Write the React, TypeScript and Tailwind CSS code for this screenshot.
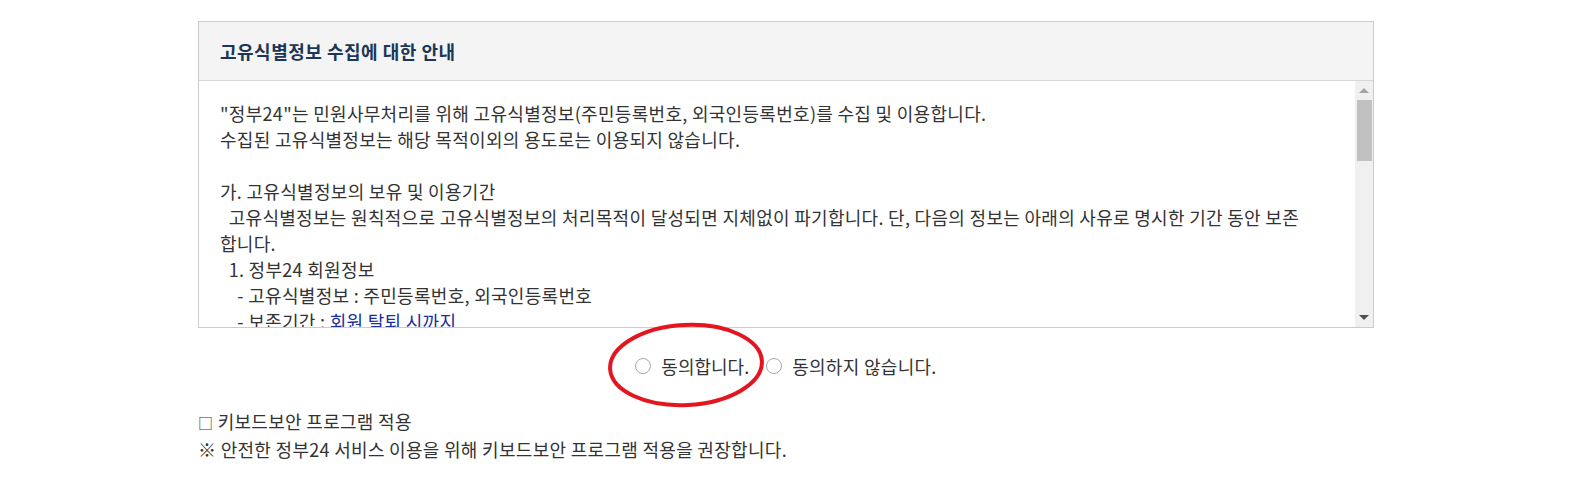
const font = { fontFamily: '"Noto Sans CJK KR", "Noto Sans", sans-serif' };

const Radio = () => (
  <span className="inline-block size-[16px] rounded-full border border-[#a8a8a8] bg-white shrink-0" />
);

export default function App() {
  return (
    <div className="min-h-screen bg-white text-[#333] text-[18px] tracking-[0.3px]" style={font}>
      <div className="w-[1176px] mx-auto pt-[21px]">
        <div className="border border-[#cccccc] bg-white">
          <div className="h-[59px] flex items-center px-[21px] bg-[#f4f4f4] border-b border-[#d6d6d6]">
            <h2 className="text-[18px] font-bold text-[#1b3656] tracking-[0.5px]">
              고유식별정보 수집에 대한 안내
            </h2>
          </div>
          <div className="flex h-[246px]">
            <div className="flex-1 overflow-hidden pl-[21px] pt-[19px] pr-[45px] text-[#333] leading-[26px] whitespace-pre-wrap">
              <p>"정부24"는 민원사무처리를 위해 고유식별정보(주민등록번호, 외국인등록번호)를 수집 및 이용합니다.</p>
              <p>수집된 고유식별정보는 해당 목적이외의 용도로는 이용되지 않습니다.</p>
              <p>&nbsp;</p>
              <p>가. 고유식별정보의 보유 및 이용기간</p>
              <p>{'  '}고유식별정보는 원칙적으로 고유식별정보의 처리목적이 달성되면 지체없이 파기합니다. 단, 다음의 정보는 아래의 사유로 명시한 기간 동안 보존합니다.</p>
              <p>{'  '}1. 정부24 회원정보</p>
              <p>{'    '}- 고유식별정보 : 주민등록번호, 외국인등록번호</p>
              <p>
                {'    '}- 보존기간 : <span className="text-[#1a2fa0]">회원 탈퇴 시까지</span>
              </p>
            </div>
            {/* scrollbar */}
            <div className="w-[18px] bg-[#f0f0f0] flex flex-col items-center">
              <div className="h-[19px] flex items-center justify-center">
                <span className="w-0 h-0 border-x-[5px] border-x-transparent border-b-[5px] border-b-[#a3a3a3]" />
              </div>
              <div className="w-[15px] h-[61px] bg-[#c1c1c1]" />
              <div className="flex-1" />
              <div className="h-[19px] flex items-center justify-center">
                <span className="w-0 h-0 border-x-[5px] border-x-transparent border-t-[5px] border-t-[#505050]" />
              </div>
            </div>
          </div>
        </div>

        <div className="h-[76px] flex items-center justify-center gap-[17px] leading-[20px]">
          <label className="relative flex items-center gap-[10px]">
            <Radio />
            <span className="tracking-normal">동의합니다.</span>
            <svg
              className="absolute left-[-29px] top-[-35px] pointer-events-none"
              width="160"
              height="88"
              viewBox="0 0 160 88"
            >
              <ellipse
                cx="80"
                cy="44"
                rx="76"
                ry="40"
                fill="none"
                stroke="#e3161f"
                strokeWidth="4"
                transform="rotate(-3 80 44)"
              />
            </svg>
          </label>
          <label className="flex items-center gap-[10px]">
            <Radio />
            <span>동의하지 않습니다.</span>
          </label>
        </div>

        <div className="mt-[4px] leading-[27px]">
          <p>
            <span className="text-[15px]">□</span> 키보드보안 프로그램 적용
          </p>
          <p>※ 안전한 정부24 서비스 이용을 위해 키보드보안 프로그램 적용을 권장합니다.</p>
        </div>
      </div>
    </div>
  );
}
